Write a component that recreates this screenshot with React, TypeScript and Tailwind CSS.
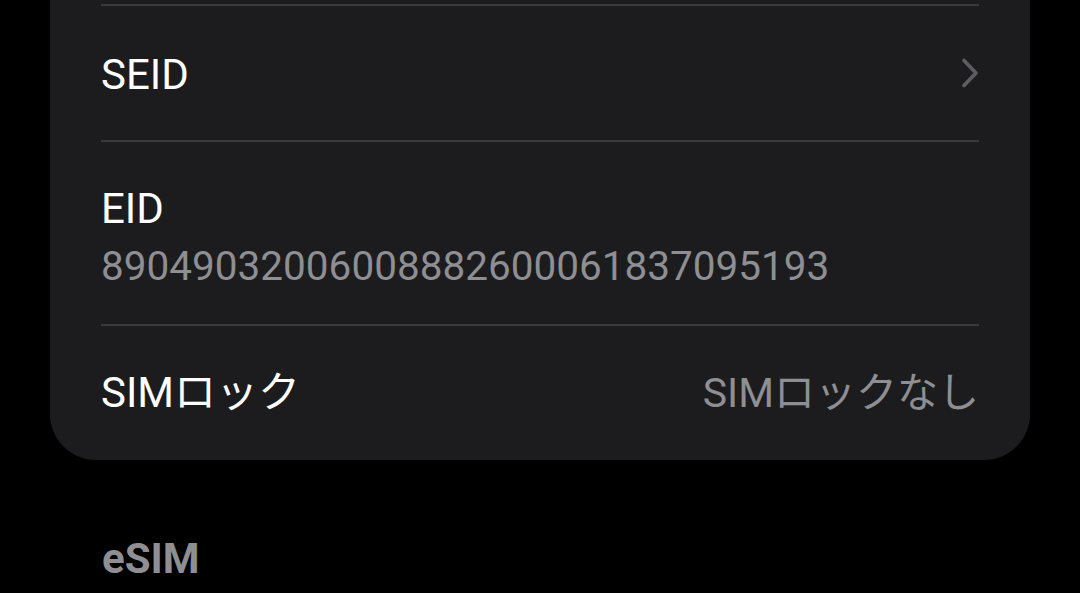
import React from 'react';

const font = { fontFamily: 'Roboto, "Noto Sans CJK JP", sans-serif' };

const Chevron = () => (
  <svg width="22" height="32" viewBox="0 0 22 32" fill="none">
    <path d="M5 3.5 L17 16 L5 28.5" stroke="#5c5c61" strokeWidth="3.8" strokeLinecap="round" strokeLinejoin="round" />
  </svg>
);

export default function App() {
  return (
    <div className="min-h-screen w-full bg-black overflow-hidden" style={font}>
      {/* Card */}
      <div className="mx-[50px] bg-[#1c1c1e] rounded-b-[46px] pt-[4px] px-[51px]">
        {/* SEID */}
        <div className="h-[136px] border-t-2 border-[#3a3a3c] flex items-center justify-between pt-[3px]">
          <span className="text-white text-[42px] leading-none">SEID</span>
          <span className="-mr-[2px] -mt-[3px]">
            <Chevron />
          </span>
        </div>

        {/* EID */}
        <div className="h-[184px] border-t-2 border-[#3a3a3c] flex flex-col pt-[47px]">
          <span className="text-white text-[42px] leading-[40px]">EID</span>
          <span className="text-[#8e8e93] text-[40.5px] leading-[40px] mt-[17px]">
            89049032006008882600061837095193
          </span>
        </div>

        {/* SIM lock */}
        <div className="h-[136px] border-t-2 border-[#3a3a3c] flex items-center justify-between">
          <span className="text-white text-[42px] leading-none">SIMロック</span>
          <span className="text-[#8e8e93] text-[41px] leading-none">SIMロックなし</span>
        </div>
      </div>

      {/* Section header */}
      <div className="px-[102px] pt-[78px]">
        <span className="text-[#8e8e93] text-[42px] font-bold leading-none">eSIM</span>
      </div>
    </div>
  );
}
